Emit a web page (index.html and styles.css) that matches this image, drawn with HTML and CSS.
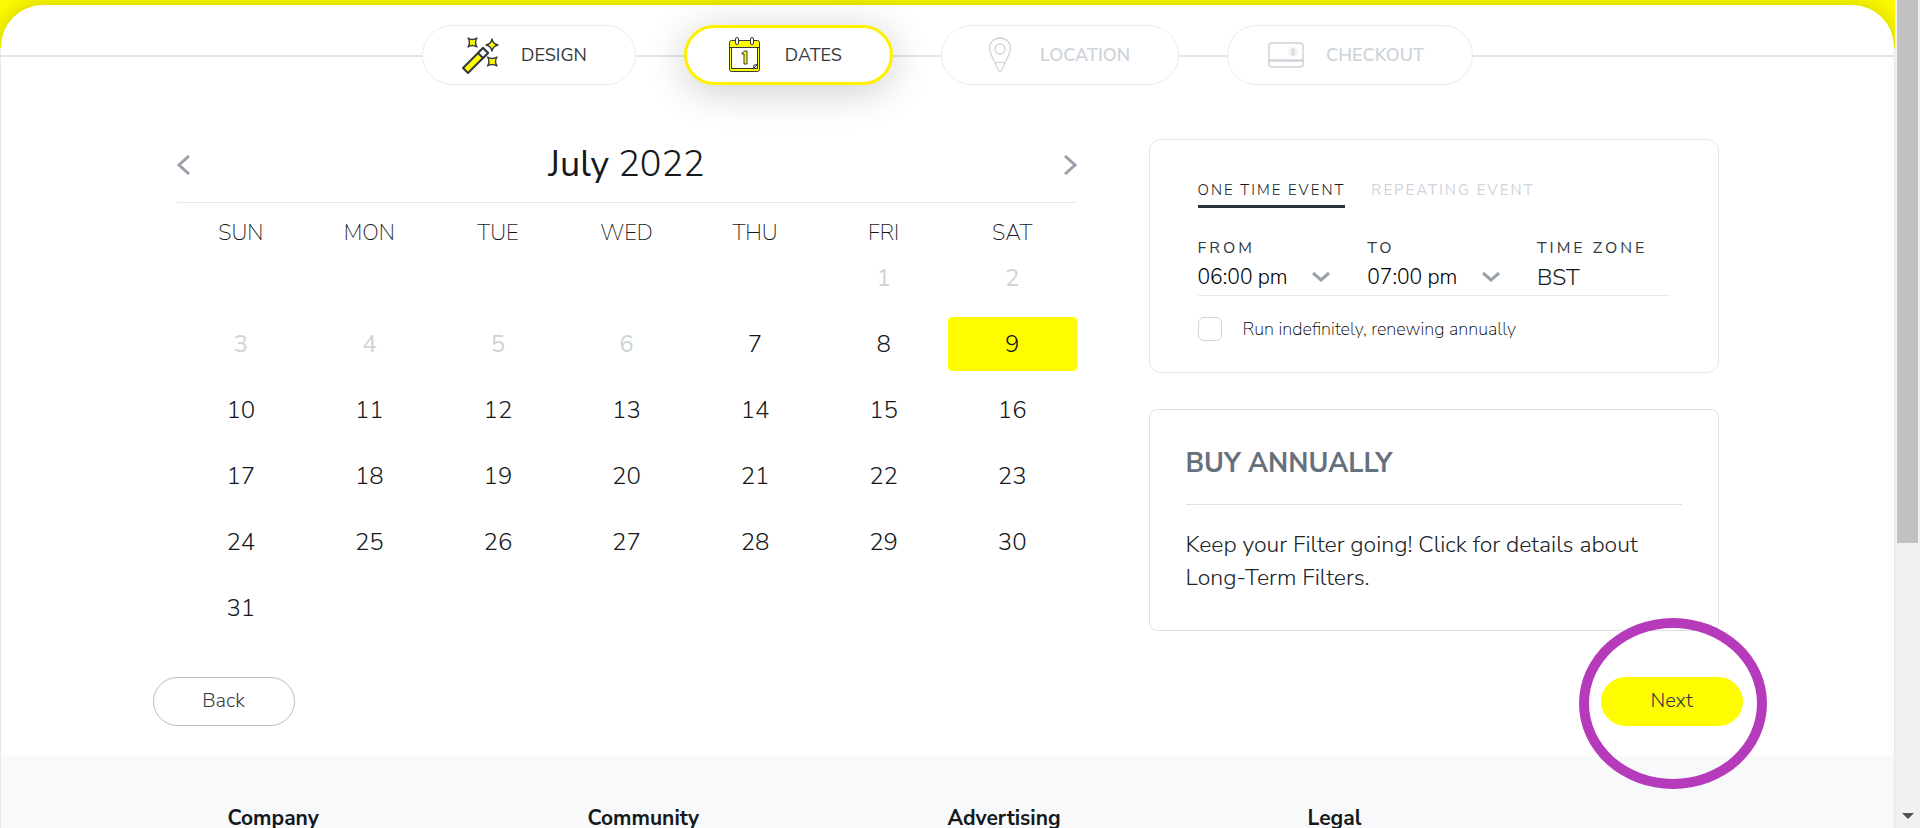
FILE: index.html
```html
<!DOCTYPE html>
<html lang="en">
<head>
    <meta charset="UTF-8">
    <meta name="viewport" content="width=device-width, initial-scale=1.0">
    <title>Dates</title>
    <link rel="stylesheet" href="styles.css">
</head>

<body>
    <div class="page">
        <div class="panel">
            <nav class="steps" aria-label="Progress">
                <a class="step" href="#design">
                    <svg class="step-icon" width="44" height="40" viewBox="0 0 44 40" fill="#fffc00" stroke="#343a40" stroke-width="2" stroke-linejoin="round">
                        <path d="M4 33 L24 13 L29 18 L9 38 Z"/>
                        <path d="M19 18 L24 13 L29 18 L24 23 Z" fill="#fff"/>
                        <g stroke-width="1.300">
                            <path d="M9 3 Q13 6 18 3 Q15 7.500 18 12 Q13 9 9 12 Q12 7.500 9 3 Z"/>
                            <path d="M33 4 Q34 9 39 10 Q34 11 33 16 Q32 11 27 10 Q32 9 33 4 Z"/>
                            <path d="M28.500 22 Q33 25 38 22 Q35 26.500 38 31 Q33 28 28.500 31 Q31.500 26.500 28.500 22 Z"/>
                        </g>
                    </svg>
                    <span>DESIGN</span>
                </a>
                <a class="step active" href="#dates" aria-current="step">
                    <svg class="step-icon" width="44" height="40" viewBox="0 0 44 40" fill="#fffc00" stroke="#343a40">
                        <rect x="6.500" y="5.500" width="30" height="31" rx="2"/>
                        <rect x="8.500" y="12.500" width="26" height="21" fill="#fff"/>
                        <path d="M6.500 12.500 H36.500"/>
                        <rect x="12.500" y="2.500" width="3" height="7" rx="1.500" fill="#fff"/>
                        <rect x="27.500" y="2.500" width="3" height="7" rx="1.500" fill="#fff"/>
                        <path d="M19 18 L22 16 H24 V29 H21 V19 H19 Z"/>
                        <path d="M30.500 33.500 L31 30 L34.500 29.500 Z" fill="#fff"/>
                    </svg>
                    <span>DATES</span>
                </a>
                <a class="step disabled" href="#location">
                    <svg class="step-icon" width="44" height="40" viewBox="0 0 44 40" fill="none" stroke="#ced4da" stroke-width="1.300">
                        <path d="M22 3 C16 3 11.500 7.500 11.500 13 C11.500 19 18 29 20 34.500 Q22 38.500 24 34.500 C26 29 32.500 19 32.500 13 C32.500 7.500 28 3 22 3 Z"/>
                        <circle cx="22" cy="14" r="5"/>
                        <path d="M17 27.500 H27"/>
                    </svg>
                    <span>LOCATION</span>
                </a>
                <a class="step disabled" href="#checkout">
                    <svg class="step-icon" width="44" height="40" viewBox="0 0 44 40" fill="none" stroke="#ced4da" stroke-width="1.500">
                        <rect x="5" y="8" width="34" height="24" rx="3"/>
                        <path d="M5 25.500 H39" stroke-width="2.500"/>
                        <circle cx="29" cy="17" r="5" fill="#f1f3f5" stroke="none"/>
                        <path d="M31 15 Q29 13.500 27.500 15 Q27.500 16.500 29 17 Q31 17.500 31 19 Q29 20.500 27 19 M29 13 V21" stroke-width="1"/>
                    </svg>
                    <span>CHECKOUT</span>
                </a>
            </nav>

            <main class="wrapper">
                <div class="columns">
                    <section class="calendar">
                        <header class="calendar-header">
                            <button type="button" class="arrow" aria-label="Previous month">
                                <svg width="14" height="20" viewBox="0 0 14 20"><path d="M12 1 L2 10 L12 19"/></svg>
                            </button>
                            <h1>July <span>2022</span></h1>
                            <button type="button" class="arrow" aria-label="Next month">
                                <svg width="14" height="20" viewBox="0 0 14 20"><path d="M2 1 L12 10 L2 19"/></svg>
                            </button>
                        </header>
                        <table class="days">
                            <thead>
                                <tr><th>SUN</th><th>MON</th><th>TUE</th><th>WED</th><th>THU</th><th>FRI</th><th>SAT</th></tr>
                            </thead>
                            <tbody>
                                <tr>
                                    <td></td><td></td><td></td><td></td><td></td>
                                    <td><button type="button" disabled>1</button></td>
                                    <td><button type="button" disabled>2</button></td>
                                </tr>
                                <tr>
                                    <td><button type="button" disabled>3</button></td>
                                    <td><button type="button" disabled>4</button></td>
                                    <td><button type="button" disabled>5</button></td>
                                    <td><button type="button" disabled>6</button></td>
                                    <td><button type="button">7</button></td>
                                    <td><button type="button">8</button></td>
                                    <td><button type="button" class="selected">9</button></td>
                                </tr>
                                <tr>
                                    <td><button type="button">10</button></td>
                                    <td><button type="button">11</button></td>
                                    <td><button type="button">12</button></td>
                                    <td><button type="button">13</button></td>
                                    <td><button type="button">14</button></td>
                                    <td><button type="button">15</button></td>
                                    <td><button type="button">16</button></td>
                                </tr>
                                <tr>
                                    <td><button type="button">17</button></td>
                                    <td><button type="button">18</button></td>
                                    <td><button type="button">19</button></td>
                                    <td><button type="button">20</button></td>
                                    <td><button type="button">21</button></td>
                                    <td><button type="button">22</button></td>
                                    <td><button type="button">23</button></td>
                                </tr>
                                <tr>
                                    <td><button type="button">24</button></td>
                                    <td><button type="button">25</button></td>
                                    <td><button type="button">26</button></td>
                                    <td><button type="button">27</button></td>
                                    <td><button type="button">28</button></td>
                                    <td><button type="button">29</button></td>
                                    <td><button type="button">30</button></td>
                                </tr>
                                <tr>
                                    <td><button type="button">31</button></td>
                                    <td></td><td></td><td></td><td></td><td></td><td></td>
                                </tr>
                            </tbody>
                        </table>
                    </section>

                    <aside class="cards">
                        <section class="card schedule">
                            <div class="tabs">
                                <button type="button" class="tab current">ONE TIME EVENT</button>
                                <button type="button" class="tab">REPEATING EVENT</button>
                            </div>
                            <div class="times">
                                <div class="field">
                                    <label for="from">FROM</label>
                                    <div class="select">
                                        <select id="from"><option>06:00 pm</option></select>
                                        <svg width="18" height="12" viewBox="0 0 18 12"><path d="M1 2 L9 9 L17 2"/></svg>
                                    </div>
                                </div>
                                <div class="field">
                                    <label for="to">TO</label>
                                    <div class="select">
                                        <select id="to"><option>07:00 pm</option></select>
                                        <svg width="18" height="12" viewBox="0 0 18 12"><path d="M1 2 L9 9 L17 2"/></svg>
                                    </div>
                                </div>
                                <div class="field">
                                    <label for="zone">TIME ZONE</label>
                                    <output id="zone">BST</output>
                                </div>
                            </div>
                            <label class="check">
                                <input type="checkbox">
                                Run indefinitely, renewing annually
                            </label>
                        </section>
                        <section class="card annual">
                            <h2>BUY ANNUALLY</h2>
                            <p>Keep your Filter going! Click for details about Long-Term Filters.</p>
                        </section>
                    </aside>
                </div>

                <div class="actions">
                    <button type="button" class="btn">Back</button>
                    <div class="next">
                        <button type="button" class="btn btn-primary">Next</button>
                        <span class="ring"></span>
                    </div>
                </div>
            </main>

            <footer class="footer">
                <div class="footer-columns">
                    <h3>Company</h3>
                    <h3>Community</h3>
                    <h3>Advertising</h3>
                    <h3>Legal</h3>
                </div>
            </footer>
        </div>
    </div>
    <div class="scrollbar">
        <div class="thumb"></div>
        <svg width="12" height="6" viewBox="0 0 12 6"><path d="M0 0 H12 L6 6 Z" fill="#505050"/></svg>
    </div>
</body>
</html>
```

FILE: styles.css
```css
* {
    box-sizing: border-box;
}
body {
    margin: 0;
    display: flex;
    height: 100vh;
    overflow: hidden;
    font-family: "Nunito Sans", Nunito, Lato, sans-serif;
    color: #343a40;
}
button, select {
    font-family: inherit;
    color: inherit;
    background: none;
    border: 0;
    padding: 0;
    cursor: pointer;
}
h1, h2, h3, p {
    margin: 0;
}
.page {
    flex: 1;
    overflow: hidden;
    padding: 5px 1px 0;
    background: linear-gradient(#fffc00 48px, #fff 48px);
}
.panel {
    background: #fff;
    border-radius: 42px 42px 0 0;
    box-shadow: 0 0 24px rgba(0, 0, 0, 0.2);
}

/* progress steps */
.steps {
    display: flex;
    justify-content: center;
    gap: 48px;
    padding-top: 20px;
    background: linear-gradient(#e3e6e9, #e3e6e9) 0 50px / 100% 2px no-repeat;
}
.step {
    display: flex;
    align-items: center;
    gap: 18px;
    height: 60px;
    padding: 0 48px 0 36px;
    background: #fff;
    border: 1px solid #e9ecef;
    border-radius: 30px;
    font-size: 18px;
    color: inherit;
    text-decoration: none;
}
.step.active {
    border: 3px solid #fff000;
    box-shadow: 0 6px 40px rgba(0, 0, 0, 0.2);
}
.step.disabled {
    color: #ced4da;
    font-weight: 600;
}

.wrapper {
    max-width: 1590px;
    margin: 0 auto;
    padding: 54px 0 30px;
}
.columns {
    display: grid;
    grid-template-columns: 900fr 570fr;
    gap: 72px;
    align-items: start;
    padding: 0 24px;
}

/* calendar */
.calendar-header {
    display: flex;
    justify-content: space-between;
    align-items: center;
    height: 64px;
    padding-bottom: 12px;
    border-bottom: 1px solid #e9e9e9;
}
.calendar-header h1 {
    font-size: 36px;
    font-weight: 400;
    color: #16191c;
}
.calendar-header span {
    font-weight: 300;
}
.arrow {
    display: flex;
}
.arrow path, .select path {
    fill: none;
    stroke: #9aa1ab;
    stroke-width: 3;
}
.days {
    width: 100%;
    table-layout: fixed;
    border-collapse: collapse;
}
.days th {
    height: 48px;
    padding: 12px 0 0;
    font-size: 22px;
    font-weight: 200;
    color: #16191c;
}
.days td {
    height: 66px;
    padding: 0 0 12px;
}
.days button {
    display: block;
    width: 100%;
    height: 54px;
    border-radius: 4px;
    font-size: 24px;
    font-weight: 300;
    color: #16191c;
}
.days button:disabled {
    font-weight: 400;
    color: #ced4da;
}
.days .selected {
    background: #fffc00;
}

/* right hand cards */
.cards {
    display: flex;
    flex-direction: column;
    gap: 36px;
}
.card {
    border: 1px solid #e5e7eb;
}
.schedule {
    padding: 37px 48px 31px;
    border-radius: 12px;
}
.tabs {
    display: flex;
    gap: 26px;
}
.tab {
    padding: 1px 0 3px;
    border-bottom: 3px solid transparent;
    font-size: 15px;
    font-weight: 400;
    line-height: 24px;
    letter-spacing: 2px;
    color: #ced4da;
}
.tab.current {
    border-color: #2d333a;
    font-weight: 300;
    color: #16191c;
}
.times {
    display: grid;
    grid-template-columns: 169fr 169fr 132fr;
    margin-top: 30px;
    border-bottom: 1px solid #e9e9e9;
}
.field label {
    display: block;
    font-size: 16px;
    line-height: 20px;
    letter-spacing: 3px;
}
.field output {
    display: block;
    padding-top: 3px;
    font-size: 23px;
    font-weight: 300;
    line-height: 34px;
    color: #16191c;
}
.select {
    display: grid;
    grid-template-columns: 1fr;
    align-items: center;
}
.select select, .select svg {
    grid-area: 1 / 1;
}
.select select {
    appearance: none;
    height: 37px;
    font-size: 21px;
    font-weight: 300;
    color: #000;
}
.select svg {
    justify-self: end;
    margin-right: 37px;
    pointer-events: none;
}
.check {
    display: flex;
    align-items: center;
    gap: 21px;
    margin-top: 21px;
    font-size: 18px;
    font-weight: 200;
    color: #000;
}
.check input {
    appearance: none;
    width: 24px;
    height: 24px;
    margin: 0;
    border: 1px solid #ced4da;
    border-radius: 6px;
}
.annual {
    padding: 34px 36px 36px;
    border-color: #dee2e6;
    border-radius: 8px;
}
.annual h2 {
    padding-bottom: 20px;
    border-bottom: 1px solid #dee2e6;
    font-size: 27px;
    font-weight: 700;
    line-height: 40px;
    color: #67717e;
}
.annual p {
    padding-top: 23px;
    font-size: 23px;
    font-weight: 300;
    line-height: 33px;
    color: #212529;
}

.actions {
    display: flex;
    justify-content: space-between;
    margin-top: 30px;
}
.btn {
    width: 142px;
    height: 49px;
    padding-bottom: 2px;
    border: 1px solid #bbb;
    border-radius: 25px;
    font-size: 20px;
    font-weight: 300;
}
.btn-primary {
    background: #fffc00;
    border-color: #fffc00;
}
.next {
    position: relative;
}
.ring {
    position: absolute;
    top: -59px;
    left: -22px;
    width: 188px;
    height: 171px;
    border: 10px solid #b63bbb;
    border-radius: 50%;
    pointer-events: none;
}

.footer {
    padding: 48px 0;
    background: #f8f9fb;
}
.footer-columns {
    display: grid;
    grid-template-columns: repeat(4, 1fr);
    max-width: 1440px;
    margin: 0 auto;
}
.footer h3 {
    font-size: 21px;
    font-weight: 700;
    line-height: 28px;
    color: #16191c;
}

.scrollbar {
    display: flex;
    flex-direction: column;
    justify-content: space-between;
    align-items: center;
    width: 25px;
    padding: 0 2px 9px;
    background: #f1f1f1;
}
.thumb {
    width: 100%;
    height: 543px;
    background: #c1c1c1;
}
```
